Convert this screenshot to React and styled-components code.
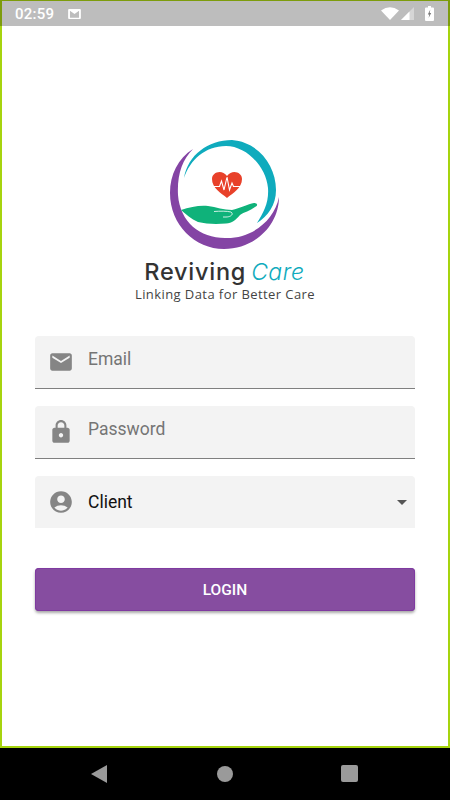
import React from "react";
import styled, { createGlobalStyle } from "styled-components";
import { MdEmail, MdLock, MdAccountCircle } from "react-icons/md";

const Global = createGlobalStyle`
    html, body {
        margin: 0;
        padding: 0;
        background: #000;
    }
    * {
        box-sizing: border-box;
    }
`;

const Page = styled.div`
    display: flex;
    flex-direction: column;
    width: 450px;
    height: 800px;
    font-family: Roboto, "Liberation Sans", sans-serif;
`;

const StatusBar = styled.div`
    display: flex;
    align-items: center;
    height: 26px;
    padding: 0 14px 0 13px;
    background: #bdbdbd;
    border: solid #7d9c0c;
    border-width: 1px 2px 0;
`;

const Time = styled.span`
    color: #fff;
    font-size: 15px;
    font-weight: 500;
    letter-spacing: 0.25px;
    margin-right: 14px;
`;

const StatusIcons = styled.div`
    display: flex;
    align-items: center;
    gap: 2px;
    margin-left: auto;
`;

const Screen = styled.div`
    flex: 1;
    display: flex;
    flex-direction: column;
    align-items: stretch;
    padding: 0 33px;
    background: #fff;
    border: solid #a6d40e;
    border-width: 0 2px 2px;
`;

const Logo = styled.svg`
    display: block;
    align-self: center;
    width: 120px;
    height: 120px;
    margin-top: 109px;
`;

const BrandName = styled.div`
    display: flex;
    justify-content: center;
    align-items: baseline;
    gap: 5px;
    margin-top: 3px;
    padding-right: 1px;
    height: 28px;
    line-height: 28px;
`;

const Reviving = styled.span`
    color: #333;
    font-family: Inter, sans-serif;
    font-size: 23.5px;
    font-weight: 500;
    letter-spacing: 0.75px;
`;

const Care = styled.span`
    color: #0fabbd;
    font-family: Inter, sans-serif;
    font-size: 23px;
    font-style: italic;
    font-weight: 300;
    letter-spacing: 0.5px;
`;

const Tagline = styled.div`
    color: #444;
    font-family: "Open Sans", sans-serif;
    font-size: 13px;
    font-weight: 400;
    letter-spacing: 0.42px;
    line-height: 16px;
    text-align: center;
`;

const Form = styled.div`
    display: flex;
    flex-direction: column;
    gap: 17px;
    margin-top: 34px;
`;

const Field = styled.div`
    display: flex;
    align-items: center;
    height: ${(p) => (p.$underline ? "53px" : "52px")};
    padding: 0 8px 0 13px;
    background: #f3f3f3;
    border-radius: 4px 4px 0 0;
    border-bottom: ${(p) => (p.$underline ? "1.5px solid #7f7f7f" : "none")};
    color: #858585;

    svg {
        flex: none;
    }
`;

const FieldText = styled.span`
    margin-left: 14px;
    margin-bottom: ${(p) => (p.$filled ? "0" : "6px")};
    color: ${(p) => (p.$filled ? "#111" : "#757575")};
    font-size: 17.5px;
`;

const Caret = styled.span`
    width: 0;
    height: 0;
    margin-left: auto;
    margin-top: 1px;
    border-left: 5.5px solid transparent;
    border-right: 5.5px solid transparent;
    border-top: 5.5px solid #555;
`;

const LoginButton = styled.button`
    height: 43px;
    margin-top: 23px;
    padding: 0;
    border: none;
    border-radius: 4px;
    background: #864da0;
    box-shadow: 0 2px 3px rgba(0, 0, 0, 0.35), inset 0 0 0 1px #7f3aa0;
    color: #fff;
    font-family: inherit;
    font-size: 15.5px;
    font-weight: 500;
`;

const NavBar = styled.div`
    display: flex;
    align-items: center;
    justify-content: space-between;
    height: 52px;
    padding: 0 92px 1px 91px;
    background: #000;
`;

const BackButton = styled.span`
    width: 0;
    height: 0;
    border-top: 9px solid transparent;
    border-bottom: 9px solid transparent;
    border-right: 16px solid #9a9a9a;
`;

const HomeButton = styled.span`
    width: 16px;
    height: 16px;
    margin: 0 -1px 0 1px;
    border-radius: 50%;
    background: #9a9a9a;
`;

const RecentButton = styled.span`
    width: 17px;
    height: 17px;
    border-radius: 2px;
    background: #9a9a9a;
`;

const App = () => {
    return (
        <Page>
            <Global />
            <StatusBar>
                <Time>02:59</Time>
                <svg width="13" height="10" viewBox="0 0 14 11">
                    <path fillRule="evenodd" fill="#fff" d="M1 0h12a1 1 0 0 1 1 1v9a1 1 0 0 1-1 1H1a1 1 0 0 1-1-1V1a1 1 0 0 1 1-1zM2 2v7.500h10V2L7 5.500z" />
                </svg>
                <StatusIcons>
                    <svg width="18" height="13" viewBox="0 0 18 13">
                        <path fill="#fff" d="M0 3.500Q9-3 18 3.500L9 13z" />
                    </svg>
                    <svg width="14" height="13" viewBox="0 0 14 13" style={{ marginRight: 8 }}>
                        <path fill="#d6d6d6" d="M13 0v13H0z" />
                        <path fill="#fff" d="M8.500 4.500V13H0z" />
                    </svg>
                    <svg width="9" height="15" viewBox="0 0 9 15">
                        <path fill="#fff" d="M3 0h3v1.500h2a1 1 0 0 1 1 1V14a1 1 0 0 1-1 1H1a1 1 0 0 1-1-1V2.500a1 1 0 0 1 1-1h2z" />
                        <path fill="#777" d="M5.300 3.500 2.800 8.500h1.500L3.600 12l2.600-5H4.700z" />
                    </svg>
                </StatusIcons>
            </StatusBar>
            <Screen>
                <Logo viewBox="165 135 120 120">
                    <path fill="#0fabbd" d="M184 178C188 155 208 140 232 140C258 142 276 165 276 190C276 205 268 216 257 223C264 212 269 202 268 188C266 166 246 146 226 146C205 146 190 160 184 178Z" />
                    <path fill="#8444a4" d="M193 149C178 158 170 175 170 193C170 225 195 249 224 249C255 249 279 225 279 197C274 222 250 239 225 238C200 238 180 222 178 195C177 175 182 160 193 149Z" />
                    <path fill="#0fb27a" d="M181 210C190 207 200 205 208 206C216 207 224 210 232 210C240 208 248 204 254 203C258 203 258 206 255 207C250 211 244 212 240 215C236 220 232 223 226 223.500C216 224.500 206 224 198 222C191 219 186 214 181 210Z" />
                    <path fill="none" stroke="#fff" strokeWidth="0.8" d="M214 211.500C220 211 227 211 231 212C234 214 231 217 226 217C225 217 224 217 223 217" />
                    <path fill="#e8412a" d="M227 198C221 193 212 188 212 179C212 172 222 169 227 176C232 169 242 172 242 179C242 188 233 193 227 198Z" />
                    <path fill="none" stroke="#fff" strokeWidth="1.1" d="M213 186.500H219.500L221.500 181L224 190L227 177L229.500 190L232 183L233.500 186.500H241" />
                </Logo>
                <BrandName>
                    <Reviving>Reviving</Reviving>
                    <Care>Care</Care>
                </BrandName>
                <Tagline>Linking Data for Better Care</Tagline>
                <Form>
                    <Field $underline>
                        <MdEmail size={26} />
                        <FieldText>Email</FieldText>
                    </Field>
                    <Field $underline>
                        <MdLock size={26} />
                        <FieldText>Password</FieldText>
                    </Field>
                    <Field>
                        <MdAccountCircle size={26} />
                        <FieldText $filled>Client</FieldText>
                        <Caret />
                    </Field>
                    <LoginButton>LOGIN</LoginButton>
                </Form>
            </Screen>
            <NavBar>
                <BackButton />
                <HomeButton />
                <RecentButton />
            </NavBar>
        </Page>
    );
};

export default App;
